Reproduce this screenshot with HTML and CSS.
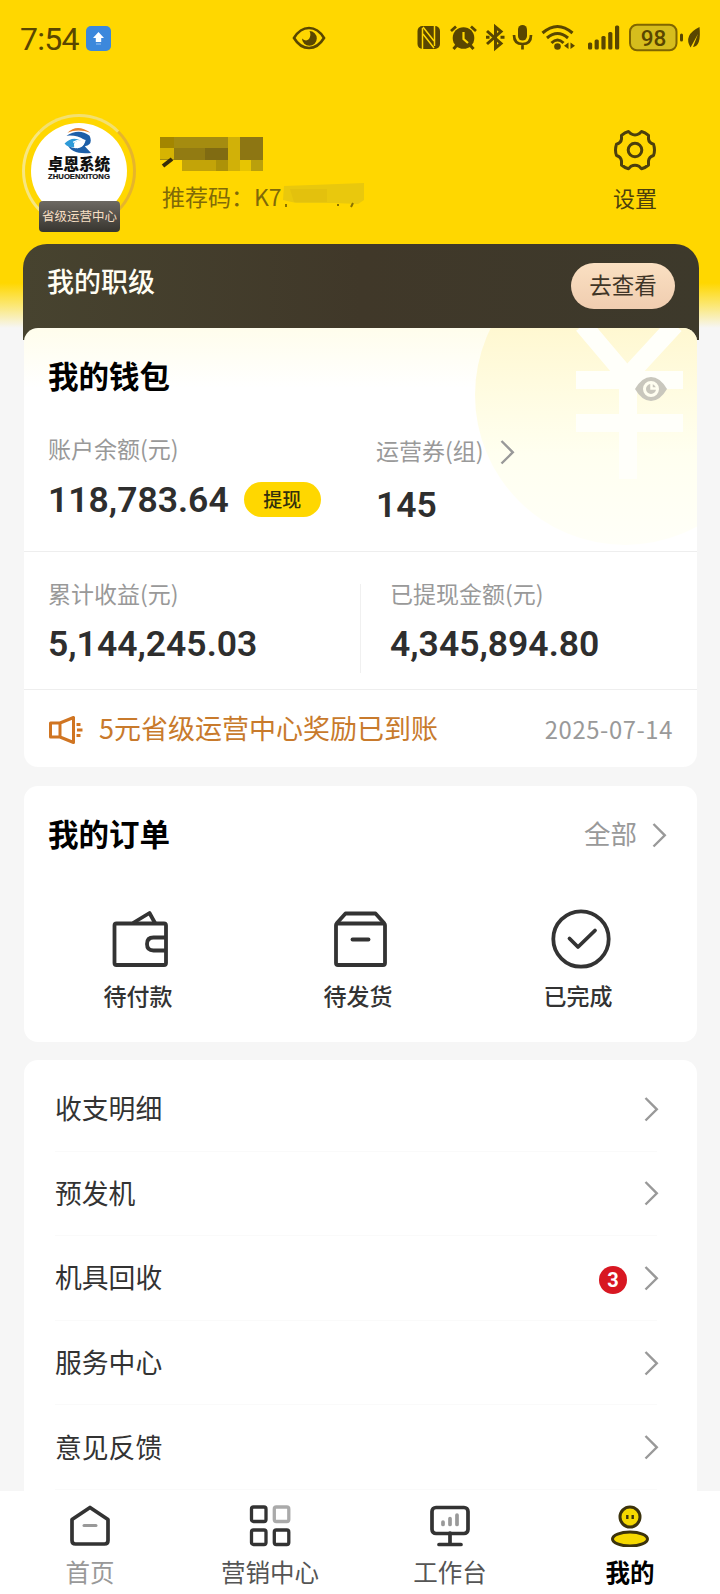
FILE: index.html
```html
<!DOCTYPE html>
<html lang="zh-CN">
<head>
<meta charset="utf-8">
<title>我的</title>
<link rel="stylesheet" href="styles.css">
</head>
<body>
<svg class="defs" width="0" height="0">
  <symbol id="chevron" viewBox="0 0 16 26"><path d="M1.500 2 L12.800 13.300 L1.500 24.500" fill="none" stroke="currentColor" stroke-width="2.400"/></symbol>
</svg>
<div class="app">
  <div class="status">
    <span class="time">7:54</span>
    <svg class="upload" width="25" height="25" viewBox="0 0 25 25"><rect width="25" height="25" rx="5" fill="#3c88dc"/><path d="M12.500 6 L18 12 H15.200 V16 H9.800 V12 H7 Z" fill="#fff"/><path d="M10 18 H15" stroke="#9cc6f5" stroke-width="1"/></svg>
    <svg class="watch" width="34" height="24" viewBox="0 0 34 24"><path d="M2 12 Q8 2 17 2 Q26 2 32 12 Q26 22 17 22 Q8 22 2 12 Z" fill="none" stroke="#594600" stroke-width="2.600"/><path d="M17.500 5 A7.400 7.400 0 1 1 10 12.500 Q14 16 17 13 Q19.500 9 17.500 5 Z" fill="#594600"/></svg>
    <svg class="tray" width="286" height="30" viewBox="0 0 286 30">
      <g fill="#594600" stroke="none">
        <rect x="1.500" y="3" width="22.500" height="23" rx="5"/>
        <path d="M6.500 5 V26 M18.500 3 V23" stroke="#ffd700" stroke-width="1.500" fill="none"/>
        <path d="M7 4 L18 18 M7 11 L18 25" stroke="#ffd700" stroke-width="1.500"/>
        <circle cx="47.500" cy="15" r="10.800"/>
        <path d="M41 22 L37.500 26 M54 22 L57.500 26" stroke="#594600" stroke-width="3"/>
        <path d="M35 8 L40 3.500 M55 3.500 L60 8" stroke="#594600" stroke-width="2.800"/>
        <path d="M47.500 9 V16 L52 20" fill="none" stroke="#ffd700" stroke-width="2.200"/>
        <path d="M71 8 L85 20.500 L79.500 25 V4 L85 8.500 L71 21" fill="none" stroke="#594600" stroke-width="3"/>
        <path d="M70 14.300 H73.500 M84.500 14.300 H88.500" stroke="#594600" stroke-width="3"/>
        <rect x="102" y="2" width="9" height="15.500" rx="4.500"/>
        <path d="M98 12 Q98 21 106.500 21 Q115 21 115 12 M106.500 21 V26.500" fill="none" stroke="#594600" stroke-width="2.700"/>
        <path d="M126.500 10 Q141.500 -3 156.500 10 M131 15 Q141.500 6 152 15 M135.500 20 Q141.500 14 147.500 20" fill="none" stroke="#594600" stroke-width="3"/>
        <circle cx="141.500" cy="23.500" r="3.300"/>
        <path d="M152.500 19.500 V26 L148 22.800 Z M154.500 19.500 V26 L159 22.800 Z"/>
        <rect x="172" y="19.500" width="4.200" height="7" rx="1.500"/>
        <rect x="178.600" y="16.500" width="4.200" height="10" rx="1.500"/>
        <rect x="185.400" y="13" width="4.200" height="13.500" rx="1.500"/>
        <rect x="192.200" y="9" width="4.200" height="17.500" rx="1.500"/>
        <rect x="199" y="2.500" width="4.200" height="24" rx="1.500"/>
      </g>
      <rect x="214" y="1.700" width="46.500" height="25.600" rx="7" fill="#d6bd1d" stroke="#806600" stroke-width="2"/>
      <text x="237.500" y="22.500" text-anchor="middle" font-family="Roboto, sans-serif" font-size="22.500" font-weight="500" fill="#594600">98</text>
      <rect x="264" y="10.500" width="3" height="8" rx="1.500" fill="#594600"/>
      <path d="M283.500 4 Q285.500 23 277 24 L282 11 L274.500 24.500 Q267 12 283.500 4 Z" fill="#594600"/>
    </svg>
  </div>

  <header class="profile">
    <div class="avatar">
      <div class="logo">
        <svg width="32" height="28" viewBox="0 0 32 28"><path d="M4 6 Q14 -4 28 6 Q15 1 4 6Z" fill="#e8842c"/><path d="M3 9 Q16 1 27 9 Q31 18 22 20 L28.500 27 Q8 29 4 18 Q9 24 18 21 Q23 18 21 13 Q14 8 3 9Z" fill="#1d5fa8"/><path d="M1 17 Q9 9 18 14 Q9 14 11 21 Q4 21 1 17Z" fill="#2e9bd8"/><path d="M10 16 Q16 12 22 14 Q21 19 14 21.500" fill="none" stroke="#fff" stroke-width="1.500"/></svg>
        <b class="logo-cn">卓恩系统</b>
        <b class="logo-en">ZHUOENXITONG</b>
      </div>
      <span class="rank">省级运营中心</span>
    </div>
    <div class="who">
      <svg class="mask" width="104" height="36" viewBox="0 0 104 36">
        <rect x="0" y="1" width="103" height="23" fill="#a58c10"/>
        <rect x="0" y="1" width="14" height="11" fill="#a38600"/><rect x="0" y="12" width="14" height="11" fill="#d6b402"/>
        <rect x="14" y="12" width="54" height="12" fill="#927b12"/><rect x="22" y="24" width="48" height="11" fill="#c3a408"/>
        <rect x="45" y="12" width="23" height="12" fill="#806b12"/><rect x="56" y="24" width="13" height="11" fill="#ad9208"/>
        <rect x="68" y="1" width="12" height="34" fill="#d1b108"/><rect x="80" y="1" width="23" height="23" fill="#8d7613"/>
        <rect x="80" y="24" width="11" height="11" fill="#e7c502"/><rect x="91" y="24" width="12" height="11" fill="#baa00c"/>
        <path d="M3 30 L12 23" stroke="#382e0a" stroke-width="4"/>
      </svg>
      <div class="code"><span>推荐码：K7</span><svg width="84" height="28" viewBox="0 0 84 28"><path d="M2 4 L30 3 L82 1 V18 L76 22 L52 21 H14 L1 18Z" fill="#e9c80d"/><path d="M8 7 H45 V20 H12Z" fill="#dfbd0d" opacity=".6"/><path d="M4 22 v3 M56 22 v2 M71 21 l-2 4" stroke="#8a7200" stroke-width="2"/></svg></div>
    </div>
    <div class="settings">
      <svg width="44" height="44" viewBox="0 0 44 44" fill="none" stroke="#4c3f0d" stroke-width="3" stroke-linejoin="round"><path d="M15.500 3.500 L18 5.800 Q22 8.200 26 5.800 L28.500 3.500 Q32 4.200 35.500 7.300 V11 Q36 15 40.500 16.200 Q42.500 22 40.500 27.500 Q36 28.800 35.500 33 V37 Q32 40 28.500 40.800 L26 38.300 Q22 36 18 38.300 L15.500 40.800 Q12 40 8.500 37 V33 Q8 28.800 3.500 27.500 Q1.500 22 3.500 16.200 Q8 15 8.500 11 V7.300 Q12 4.200 15.500 3.500Z"/><circle cx="22" cy="22" r="6.800"/></svg>
      <span>设置</span>
    </div>
  </header>

  <section class="level"><h2>我的职级</h2><span class="view">去查看</span></section>

  <section class="wallet">
    <svg class="coin" width="300" height="300" viewBox="0 0 300 300">
      <defs><linearGradient id="coin-fill" x1="0" y1="0" x2="0" y2="1"><stop offset=".25" stop-color="#fff7cf"/><stop offset=".5" stop-color="#fffce2"/><stop offset=".7" stop-color="#fffff0"/><stop offset="1" stop-color="#fffff8"/></linearGradient></defs>
      <circle cx="150" cy="150" r="150" fill="url(#coin-fill)"/>
      <path d="M108 80 L152 132 L200 80 M101 135 H208 M101 178 H208 M153 130 V234" fill="none" stroke="#fffffa" stroke-width="18"/>
    </svg>
    <div class="wallet-head">
      <h2>我的钱包</h2>
      <svg width="32" height="24" viewBox="0 0 32 24"><path d="M0 12 Q7 0 16 0 Q25 0 32 12 Q25 24 16 24 Q7 24 0 12Z" fill="#c9c7bd"/><circle cx="16" cy="12" r="6.500" fill="#c9c7bd" stroke="#fffef0" stroke-width="3"/><path d="M16.500 7 V11.500 H21" stroke="#fffef0" stroke-width="2.500" fill="none"/></svg>
    </div>
    <div class="balances">
      <div class="balance">
        <span class="label">账户余额(元)</span>
        <div class="amount"><span class="num">118,783.64</span><span class="withdraw">提现</span></div>
      </div>
      <div class="coupon">
        <div class="label">运营券(组)<svg class="chev"><use href="#chevron"/></svg></div>
        <span class="num">145</span>
      </div>
    </div>
    <div class="totals">
      <div class="total"><span class="label">累计收益(元)</span><span class="num">5,144,245.03</span></div>
      <div class="total second"><span class="label">已提现金额(元)</span><span class="num">4,345,894.80</span></div>
    </div>
    <div class="notice">
      <svg width="34" height="30" viewBox="0 0 34 30" fill="none" stroke="#d07522" stroke-width="3"><path d="M1.500 8 H11 L24.500 2.500 V27.500 L11 22 H1.500Z M11 8 V22" stroke-linejoin="round"/><path d="M27.500 9.500 H31.500 M28 15 H33.500 M27.500 20.500 H31.500"/></svg>
      <span class="msg">5元省级运营中心奖励已到账</span>
      <span class="date">2025-07-14</span>
    </div>
  </section>

  <section class="orders">
    <div class="orders-head"><h2>我的订单</h2><span class="all">全部</span><svg class="chev"><use href="#chevron"/></svg></div>
    <div class="order-grid">
      <div class="order"><svg width="62" height="64" viewBox="0 0 62 64" fill="none" stroke="#333" stroke-width="3.800" stroke-linejoin="round"><rect x="4.500" y="17.500" width="51.500" height="41.500" rx="2"/><path d="M23 17 L39.500 7 L45 17 M56 31.500 H43.500 Q37 31.500 37 38 Q37 44.500 43.500 44.500 H56"/></svg><span>待付款</span></div>
      <div class="order"><svg width="62" height="64" viewBox="0 0 62 64" fill="none" stroke="#333" stroke-width="3.800" stroke-linejoin="round"><rect x="6" y="17.500" width="49" height="41.500" rx="2"/><path d="M6.500 17.500 L15.500 7.500 H45.500 L54.500 17.500"/><path d="M22.500 33.500 H38.500" stroke-linecap="round"/></svg><span>待发货</span></div>
      <div class="order"><svg width="62" height="64" viewBox="0 0 62 64" fill="none" stroke="#333" stroke-width="3.800" stroke-linejoin="round" stroke-linecap="round"><circle cx="31" cy="33" r="27.700"/><path d="M19.500 32.500 L28 41 L45 24.500"/></svg><span>已完成</span></div>
    </div>
  </section>

  <section class="menu">
    <div class="item"><span>收支明细</span><svg class="chev"><use href="#chevron"/></svg></div>
    <div class="item"><span>预发机</span><svg class="chev"><use href="#chevron"/></svg></div>
    <div class="item"><span>机具回收</span><b class="count">3</b><svg class="chev"><use href="#chevron"/></svg></div>
    <div class="item"><span>服务中心</span><svg class="chev"><use href="#chevron"/></svg></div>
    <div class="item"><span>意见反馈</span><svg class="chev"><use href="#chevron"/></svg></div>
  </section>

  <nav class="tabs">
    <div class="tab muted"><svg width="44" height="44" viewBox="0 0 44 44" fill="none" stroke="#333" stroke-width="3.700" stroke-linejoin="round"><path d="M22 4.500 L40 16.500 V37.500 Q40 41 36.500 41 H7.500 Q4 41 4 37.500 V16.500Z"/><path d="M16 22.500 H28" stroke="#999" stroke-width="3" stroke-linecap="round"/></svg><span>首页</span></div>
    <div class="tab"><svg width="44" height="44" viewBox="0 0 44 44" fill="none" stroke="#333" stroke-width="3.300"><rect x="3.500" y="4" width="14.500" height="14.500" rx="2"/><rect x="26.300" y="4" width="14.500" height="14.500" rx="2" stroke="#aaa"/><rect x="3.500" y="27" width="14.500" height="14.500" rx="2"/><rect x="26.300" y="27" width="14.500" height="14.500" rx="2"/></svg><span>营销中心</span></div>
    <div class="tab"><svg width="44" height="44" viewBox="0 0 44 44" fill="none" stroke="#333" stroke-width="3.700" stroke-linecap="round"><rect x="4" y="4.500" width="36" height="26" rx="4"/><path d="M22 30 V41.500 M11 41.500 H33"/><path d="M15 19 V21.500 M22 15.500 V21.500 M29 12 V21.500" stroke="#999"/></svg><span>工作台</span></div>
    <div class="tab active"><svg width="44" height="44" viewBox="0 0 44 44" fill="#f5d800" stroke="#3c330c" stroke-width="3"><circle cx="22" cy="14" r="10"/><ellipse cx="22" cy="36" rx="17.500" ry="7"/><path d="M19.300 12 V16 M24.700 12 V16" stroke-width="2.400"/></svg><span>我的</span></div>
  </nav>
</div>
</body>
</html>
```
FILE: styles.css
```css
* { box-sizing: border-box; }
body { margin: 0; font-family: "Noto Sans CJK SC", sans-serif; color: #333; }
h2 { margin: 0; }
svg { display: block; flex: none; }
.defs { position: absolute; }
.app {
  width: 720px; height: 1594px; overflow: hidden;
  display: flex; flex-direction: column;
  background: linear-gradient(#ffd700 0, #ffd700 283px, #fbe878 306px, #f6f6f6 328px);
}
.chev { width: 16px; height: 26px; color: #999; }

.status { height: 76px; padding: 0 4px 0 20px; display: flex; align-items: center; }
.time { width: 66px; font: 400 32px/32px Roboto, sans-serif; letter-spacing: -.7px; color: #594600; padding-top: 2px; }
.watch { margin-left: 181px; }
.tray { margin-left: auto; margin-right: 14px; }

.profile { height: 168px; padding: 38px 63px 0 22px; display: flex; }
.avatar {
  position: relative; width: 114px; height: 114px; border-radius: 50%;
  border: 3px solid #e6b52c; border-top-color: #f3e070; border-left-color: #f7e680;
  padding: 6px;
}
.logo {
  width: 96px; height: 96px; border-radius: 50%; background: #fff;
  display: flex; flex-direction: column; align-items: center; padding-top: 4px;
  color: #111;
}
.logo svg { height: 27px; }
.logo-cn { font-size: 15.600px; font-weight: 900; line-height: 16px; height: 16px; margin-top: 1px; white-space: nowrap; }
.logo-en { font: 700 7.700px/9px "Liberation Sans", sans-serif; -webkit-text-stroke: .2px #111; margin-top: 1px; }
.rank {
  position: absolute; left: 14px; top: 84px; width: 81px; height: 31px; border-radius: 4px;
  background: linear-gradient(#6d6963, #37352f); color: #f7dfc3;
  font-size: 12.500px; line-height: 30px; text-align: center; white-space: nowrap;
}
.who { margin-left: 24px; padding-top: 22px; flex: 1; }
.code { display: flex; align-items: center; margin-top: 7px; font-size: 23px; line-height: 34px; color: #806a08; padding-left: 2px; }
.settings { display: flex; flex-direction: column; align-items: center; padding-top: 14px; width: 44px; color: #4c3f0d; }
.settings span { font-size: 22px; line-height: 32px; margin-top: 9px; white-space: nowrap; }

.level {
  margin: 0 21px 0 23px; height: 96px; padding: 19px 24px 0; flex: none;
  border-radius: 24px 24px 0 0; background: linear-gradient(90deg, #47432f, #403829 50%, #3d392b);
  display: flex; justify-content: space-between;
}
.level h2 { font-size: 27px; line-height: 36px; font-weight: 500; color: #fffdf2; }
.view {
  width: 104px; height: 46px; border-radius: 23px; background: linear-gradient(#fae0c2, #f0cdb0);
  font-size: 22.500px; line-height: 43px; text-align: center; color: #403527;
}

.wallet {
  position: relative; margin: -12px 23px 0 24px; height: 439px; flex: none; overflow: hidden;
  border-radius: 14px; background: linear-gradient(#fffdec, #fff 60px);
}
.coin { position: absolute; left: 451px; top: -83px; }
.wallet-head { position: relative; display: flex; justify-content: space-between; padding: 25px 30px 0 24px; height: 102px; }
.wallet-head svg { margin-top: 24px; }
.wallet h2, .orders h2 { font-size: 30.500px; line-height: 44px; font-weight: 700; color: #000; }
.label { font-size: 23px; line-height: 34px; color: #999; display: flex; align-items: center; }
.num { font: 600 35.500px/40px Roboto, sans-serif; color: #2e2e2e; }
.balances { position: relative; display: flex; height: 122px; padding-left: 24px; border-bottom: 1px solid #eee; }
.balance { width: 328px; padding-top: 1px; }
.amount { display: flex; align-items: center; margin-top: 13px; }
.amount .num { padding-top: 2px; }
.withdraw {
  width: 77px; height: 35px; margin-left: 15px; border-radius: 18px; background: #ffd700;
  font-size: 19px; line-height: 33px; text-align: center; font-weight: 500; color: #33300c;
}
.coupon { padding-top: 3px; }
.coupon .chev { margin-left: 16px; margin-top: 3px; }
.coupon .num { display: block; margin-top: 18px; }
.totals { display: flex; height: 138px; border-bottom: 1px solid #eee; padding: 24px 0 16px 24px; }
.total { width: 312px; display: flex; flex-direction: column; gap: 14px; }
.total.second { border-left: 1px solid #f0f0f0; padding-left: 29px; margin-top: 8px; }
.total.second .label { margin-top: -8px; }
.notice { display: flex; align-items: center; height: 77px; padding: 0 24px 0 25px; }
.notice svg { margin-top: 2px; }
.msg { margin: -3px 0 0 16px; font-size: 27px; color: #c87a2c; }
.date { margin-left: auto; font-size: 23.800px; color: #999; letter-spacing: .6px; }

.orders { margin: 19px 23px 0 24px; height: 256px; flex: none; border-radius: 14px; background: #fff; }
.orders-head { display: flex; align-items: center; padding: 25px 29px 0 24px; }
.all { margin-left: auto; margin-right: 15px; font-size: 26.500px; line-height: 44px; color: #999; }
.orders-head .chev { margin-top: 3px; }
.order-grid { display: grid; grid-template-columns: repeat(3, 220px); padding: 51px 0 0 4px; }
.order { display: flex; flex-direction: column; align-items: center; }
.order svg { margin-left: 6px; }
.order span { font-size: 23px; line-height: 34px; margin-top: 8px; font-weight: 500; color: #333; }

.menu { margin: 18px 23px 0 24px; padding: 7px 40px 0 31px; height: 431px; flex: none; border-radius: 14px 14px 0 0; background: #fff; }
.item { height: 84.600px; display: flex; align-items: center; justify-content: space-between; font-size: 26.800px; color: #333; border-bottom: 1px solid #fafafa; }
.item > span { margin-top: -2px; }
.item .chev { margin-right: -3px; }
.count {
  width: 28px; height: 28px; border-radius: 50%; background: #d81722; color: #fff;
  margin: 4px 17px 0 auto; font: 700 20px/28px Roboto, sans-serif; text-align: center;
}
.tabs { height: 103px; flex: none; background: #fff; display: grid; grid-template-columns: repeat(4, 1fr); padding-top: 12px; }
.tab { display: flex; flex-direction: column; align-items: center; font-size: 24.500px; line-height: 36px; color: #555; gap: 7px; }
.muted { color: #999; }
.active { color: #000; font-weight: 700; }
```
